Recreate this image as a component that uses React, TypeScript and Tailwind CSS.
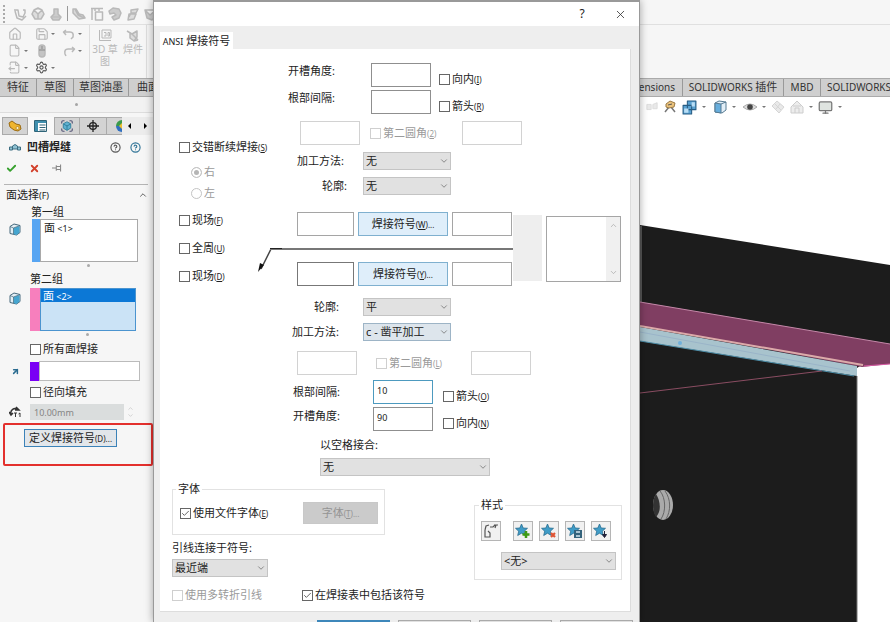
import React from "react";
import {
  Home, Save, File, Settings, FileOutput, Box, Check, X,
  ChevronUp, ChevronDown, Monitor, CircleHelp, ArrowUpRight, Scan,
} from "lucide-react";

function Tick({ children, k, checked, disabled, className = "" }: {
  children: React.ReactNode; k?: string; checked?: boolean; disabled?: boolean; className?: string;
}) {
  return (
    <label className={`flex h-4 shrink-0 items-center gap-[2px] whitespace-nowrap ${disabled ? "text-[#9a9a9a]" : ""} ${className}`}>
      <span className="grid size-[11px] shrink-0">
        <input
          type="checkbox"
          defaultChecked={checked}
          disabled={disabled}
          className={`col-start-1 row-start-1 size-[11px] appearance-none border bg-white ${disabled ? "border-[#cfcfcf]" : "border-[#666]"}`}
        />
        {checked && <Check className="pointer-events-none col-start-1 row-start-1 size-[11px] p-px text-[#333]" />}
      </span>
      <span>{children}{k && <span className="text-[8px]">(<u>{k}</u>)</span>}</span>
    </label>
  );
}

function Drop({ value, label, className = "", tone = "bg-[#e1e1e1] border-[#c4c4c4]" }: {
  value: string; label: string; className?: string; tone?: string;
}) {
  return (
    <span className={`grid h-[18px] shrink-0 ${className}`}>
      <select aria-label={label} className={`col-start-1 row-start-1 h-[18px] w-full appearance-none border pr-4 pl-[2px] text-[11px] leading-4 ${tone}`}>
        <option>{value}</option>
      </select>
      <ChevronDown className="pointer-events-none col-start-1 row-start-1 mr-[2px] size-[10px] self-center justify-self-end text-[#777]" />
    </span>
  );
}

function Field({ label, value, className = "w-[60px]", tone = "border-[#8f8f8f]" }: {
  label: string; value?: string; className?: string; tone?: string;
}) {
  return (
    <input
      aria-label={label}
      defaultValue={value}
      className={`h-6 shrink-0 border bg-white px-[3px] pb-1 text-[9px] ${className} ${tone}`}
    />
  );
}

function Caret() {
  return <span className="size-0 border-x-2 border-t-2 border-x-transparent border-t-[#777]" />;
}

function Glyph({ children, className = "size-[14px]" }: { children: React.ReactNode; className?: string }) {
  return <svg viewBox="0 0 14 14" className={`shrink-0 ${className}`} fill="none" stroke="currentColor" strokeLinejoin="round">{children}</svg>;
}

function RibbonButton({ label, caret, children }: { label: string; caret?: boolean; children: React.ReactNode }) {
  return (
    <button aria-label={label} className="flex h-[17px] w-[27px] items-center justify-between pr-[7px]">
      {children}
      {caret && <Caret />}
    </button>
  );
}

function Ribbon() {
  return (
    <header className="shrink-0 bg-[#f6f6f6]">
      <div className="flex h-[25px] items-center gap-1 overflow-hidden border-b border-[#e0e0e0] pt-[3px] pl-[3px] text-[#b9b9b9]">
        <span className="mr-1 h-[18px] border-l-2 border-dotted border-[#aaa]" />
        <Glyph><path d="M1 3h4l1 6 4 1 2-4V3h-2M2 4l2 7 5 2 4-4" strokeWidth="1.500" /></Glyph>
        <Glyph><path d="M3 3 7 1l4 2 2 4-3 5H4L1 7zM3 3l4 4 4-4M7 7v5" strokeWidth="1.500" fill="#ddd" /></Glyph>
        <Glyph><path d="M5 2h4v5l3 3-2 3H4l-2-3 3-3z" fill="#ccc" strokeWidth="1.500" /><path d="M3 10h8" /></Glyph>
        <span className="h-[15px] border-l border-[#999]" />
        <Glyph><path d="M1 2v4l6 6 6-1-2-3-4-1-3-5zM3 2l3 6 6 3" fill="#d8d8d8" strokeWidth="1.500" /></Glyph>
        <Glyph><path d="M1 1.500h12M2 1v12M5.500 5h7v8h-7zM5 1v3M9 1v3" strokeWidth="1.500" /></Glyph>
        <Glyph><path d="M1 4 5 1l6 1 2 4-2 5-5 2-2-3 4-2-2-2-4 1z" fill="#ccc" strokeWidth="1.500" /></Glyph>
        <Glyph><path d="m5 3 7-1-2 4H5zM3 7h7l-2 5-6 1zM5 6l-2 4" fill="#ddd" strokeWidth="1.500" /></Glyph>
        <Glyph><path d="M1 3h11v6l-4 4-5-2zM1 3l5 5 6-5" fill="#ccc" strokeWidth="1.500" /></Glyph>
      </div>
      <div className="flex h-[53px] text-[#b9b9b9]">
        <div className="grid grid-cols-[27px_27px_27px] content-start border-r border-[#dedede] pl-2">
          <RibbonButton label="主页"><Home className="size-[14px]" /></RibbonButton>
          <RibbonButton label="保存" caret><Save className="size-[14px]" /></RibbonButton>
          <RibbonButton label="撤销" caret><Glyph><path d="M4 3 1.500 5 4 8M2 5h6q4 0 3 5l-2 2" strokeWidth="1.500" /></Glyph></RibbonButton>
          <RibbonButton label="新建" caret><File className="size-[13px]" /></RibbonButton>
          <RibbonButton label="选择"><Glyph><rect x="4" y="1" width="6" height="12" rx="3" fill="#c4c4c4" strokeWidth="1.5" /><path d="M4 6h6M7 2v3" stroke="#888" /></Glyph></RibbonButton>
          <RibbonButton label="重做" caret><Glyph><path d="m10 3 2.500 2L10 8M12 5H6Q2 5 3 10l1 2" strokeWidth="1.500" /></Glyph></RibbonButton>
          <RibbonButton label="打开" caret><FileOutput className="size-[13px]" /></RibbonButton>
          <RibbonButton label="选项" caret><Settings className="size-[13px] text-[#555]" /></RibbonButton>
        </div>
        <button className="flex w-[30px] flex-col items-center pt-1 text-[10px] leading-[12px]">
          <Glyph><path d="M1.500 1v10.500H13M4 1h9v8H4zM6 3.500h2v3.500H6M10 3.500v3.500h1.500v-3.500z" /></Glyph>
          <span>3D 草图</span>
        </button>
        <button className="flex w-[27px] flex-col items-center border-r border-[#dedede] pt-1 text-[10px] leading-[12px]">
          <Glyph><path d="M1 2 6 5l5-3v6l-3 4-4-3V4M6 5l6 6M8 12l4-1" strokeWidth="1.500" fill="#ddd" /></Glyph>
          <span>焊件</span>
        </button>
      </div>
      <nav className="flex h-[19px] border-y border-[#aaa] bg-[#cfcfcf] text-[11px] text-[#333]">
        <button className="w-[37px] border-r border-[#999]">特征</button>
        <button className="w-[37px] border-r border-[#999]">草图</button>
        <button className="w-[55px] border-r border-[#999]">草图油墨</button>
        <button className="w-[431px] border-r border-[#999] pl-2 text-left">曲面</button>
        <button className="w-[123px] border-r border-[#999] pr-[7px] text-right text-[10px]">Dimensions</button>
        <button className="w-[101px] border-r border-[#999] text-[10px] whitespace-nowrap">SOLIDWORKS <span className="text-[11px]">插件</span></button>
        <button className="w-[37px] border-r border-[#999] text-[10px]">MBD</button>
        <button className="min-w-0 flex-1 pl-[6px] text-left text-[10px] whitespace-nowrap">SOLIDWORKS</button>
      </nav>
    </header>
  );
}

function FaceCube() {
  return (
    <svg viewBox="0 0 12 13" className="h-[13px] w-3 shrink-0">
      <path d="M1 3.500 5 1l6 1.500v7L7.500 12 1 10.500z" fill="#e3eef4" stroke="#46697c" strokeLinejoin="round" />
      <path d="M4.500 5 10.500 3v6.500L7.500 12l-3-1z" fill="#45a5cf" />
      <path d="M1 3.500 4.500 5 11 2.500M4.500 5v6" fill="none" stroke="#46697c" strokeWidth=".7" />
    </svg>
  );
}

function PropertyPanel() {
  return (
    <aside className="flex w-[153px] shrink-0 flex-col bg-[#f6f6f6]">
      <div className="grid h-4 place-items-center border-b border-[#ddd] bg-[#f2f2f2]">
        <span className="size-[3px] rounded-full bg-[#a5a5a5]" />
      </div>
      <div className="mt-1 flex h-[18px] pl-[2px]">
        <button aria-label="特征树" className="grid w-[26px] place-items-center border border-[#aaa] bg-[#d3d3d3]">
          <svg viewBox="0 0 14 12" className="h-3 w-[14px]">
            <path d="M1 3 4 1l4 3 4 1 1 4-3 2-4-1-4-3z" fill="#efb52e" stroke="#9a6a12" />
            <circle cx="9.500" cy="8" r="1.500" fill="#fff3c8" stroke="#9a6a12" strokeWidth=".6" />
          </svg>
        </button>
        <button aria-label="属性" className="grid w-[26px] place-items-center bg-[#f8f8f8]">
          <svg viewBox="0 0 13 12" className="h-3 w-[13px]">
            <path d="M.500.500h12v11H.500z" fill="#fff" stroke="#2f6478" />
            <path d="M1 1h3v10H1zM1 1h11v2H1z" fill="#3f8fae" />
            <path d="M5.500 5h6M5.500 7.500h6M5.500 10h6" stroke="#2f6478" />
          </svg>
        </button>
        <button aria-label="配置" className="grid w-[26px] place-items-center border border-[#aaa] bg-[#d3d3d3]">
          <span className="grid">
            <Scan className="col-start-1 row-start-1 size-[14px] text-[#557]" />
            <Box className="col-start-1 row-start-1 size-[10px] place-self-center fill-[#5fb0d0] text-[#2a7896]" />
          </span>
        </button>
        <button aria-label="尺寸" className="grid w-[27px] place-items-center border-y border-[#aaa] bg-[#d3d3d3]">
          <Glyph className="size-3 text-[#222]"><circle cx="7" cy="7" r="4" strokeWidth="1.5" /><path d="M7 0v14M0 7h14" strokeWidth="1.5" /></Glyph>
        </button>
        <button aria-label="外观" className="flex w-[16px] items-center justify-end border border-r-0 border-[#aaa] bg-[#d3d3d3]">
          <svg viewBox="0 0 7 12" className="h-3 w-[7px]">
            <path d="M7 0A6 6 0 0 0 1 6h6z" fill="#3a9a4a" /><path d="M1 6a6 6 0 0 0 6 6V6z" fill="#2f6fc0" /><path d="M7 3v6L4 6z" fill="#f0c030" />
          </svg>
        </button>
        <button aria-label="向左" className="grid w-[15px] place-items-center bg-[#ececec]"><span className="size-0 border-y-[3px] border-r-[3px] border-y-transparent border-r-black" /></button>
        <button aria-label="向右" className="grid w-4 place-items-center bg-[#ececec]"><span className="size-0 border-y-[3px] border-l-[3px] border-y-transparent border-l-black" /></button>
      </div>
      <div className="mt-[3px] flex h-[18px] items-center pr-3 pl-[9px]">
        <svg viewBox="0 0 12 7" className="h-[7px] w-3">
          <path d="M.5 3h3v3h-3zM8.500 3h3v3h-3zM3.500 2 6 .5 8.500 2v3H3.500z" fill="#8fc1d2" stroke="#3d6e82" />
        </svg>
        <h2 className="ml-[6px] flex-1 text-[11px] font-bold">凹槽焊缝</h2>
        <button aria-label="提示" className="mr-[9px]"><CircleHelp className="size-[11px] text-[#555]" strokeWidth={2.5} /></button>
        <button aria-label="帮助"><CircleHelp className="size-[11px] text-[#2f7396]" strokeWidth={2.5} /></button>
      </div>
      <div className="mt-[3px] flex h-[18px] items-center gap-3 pl-[6px]">
        <button aria-label="确定"><Check className="size-[11px] text-[#35a02c]" strokeWidth={4} /></button>
        <button aria-label="取消"><X className="size-[11px] text-[#d2412c]" strokeWidth={4} /></button>
        <button aria-label="固定"><Glyph className="size-[10px] text-[#888]"><path d="M0 7h6M6 3v8M6 5h6v4H6M12 2v10" strokeWidth="1.500" /></Glyph></button>
      </div>
      <section className="mt-[7px] mr-[5px] ml-1 border-t border-[#b5b5b5]">
        <div className="flex h-[20px] items-center justify-between pl-[2px]">
          <h3>面选择<span className="text-[9px]">(F)</span></h3>
          <ChevronUp className="size-[10px] text-[#444]" />
        </div>
        <div className="pl-[27px] leading-[14px]">第一组</div>
        <div className="flex h-[43px] pl-[5px]">
          <div className="w-[23px] pt-1"><FaceCube /></div>
          <div className="w-2 bg-[#57a5f2]" />
          <div className="w-[98px] border border-[#a9a9a9] bg-white pl-[3px] leading-[15px]">面<span className="text-[9px]"> &lt;1&gt;</span></div>
        </div>
        <div className="mt-[2px] ml-[83px] size-[3px] rounded-full bg-[#aaa]" />
        <div className="mt-[5px] pl-[26px] leading-[14px]">第二组</div>
        <div className="mt-[2px] flex h-[43px] pl-[5px]">
          <div className="w-[21px] pt-1"><FaceCube /></div>
          <div className="w-[10px] bg-[#f77fbd]" />
          <div className="w-[96px] border border-[#4b94cf] bg-[#cbe3f6]">
            <div className="h-[13px] bg-[#0c78d6] pl-[2px] leading-[13px] text-white">面<span className="text-[9px]"> &lt;2&gt;</span></div>
          </div>
        </div>
        <div className="mt-[2px] ml-[82px] size-[3px] rounded-full bg-[#aaa]" />
        <Tick className="mt-[5px] ml-[26px]">所有面焊接</Tick>
        <div className="mt-1 flex h-5 items-center pl-[7px]">
          <ArrowUpRight className="mr-[10px] size-[9px] text-[#2a6c90]" strokeWidth={4} />
          <span className="h-[19px] w-[9px] bg-[#7a00f5]" />
          <input aria-label="焊接方向" className="h-5 w-[101px] border border-[#bbb] bg-white" />
        </div>
        <Tick className="mt-[3px] ml-[26px]">径向填充</Tick>
        <div className="mt-1 flex h-4 items-center pl-[5px]">
          <svg viewBox="0 0 13 12" className="mr-2 h-3 w-[13px]" fill="none" stroke="#333">
            <path d="M2 8C1 4 5 1 9 3.500M0 6l2 3 2-2M7 1l3 3H6" strokeWidth="1.5" />
            <path d="M5 7h3M6.500 7v4M9.500 8l1.500-1v4" />
          </svg>
          <input aria-label="半径" disabled defaultValue="10.00mm" className="h-4 w-[94px] bg-[#dadddd] px-1 text-[9px] text-[#858585]" />
          <span className="ml-[3px] flex flex-col justify-between text-[#bbb]">
            <ChevronUp className="size-[7px]" /><ChevronDown className="size-[7px]" />
          </span>
        </div>
      </section>
      <div className="mt-[3px] ml-[3px] h-[43px] rounded-[2px] border-2 border-[#e3302d] pt-1 pl-[19px]">
        <button className="h-[18px] w-[93px] border border-[#3b82b8] bg-[#e2e6ea] leading-4 whitespace-nowrap">
          定义焊接符号<span className="text-[8px]">(D)...</span>
        </button>
      </div>
    </aside>
  );
}

function Viewport() {
  return (
    <main className="flex min-w-0 flex-1 flex-col bg-white pl-[487px]">
      <div className="flex h-5 shrink-0 items-center gap-[5px] pl-[6px] text-[#777]">
        <Glyph className="size-3 text-[#d9d9d9]"><path d="M1 4h5v6H1zM8 4l5-2v7H8z" fill="#e9e9e9" /></Glyph>
        <Glyph><path d="m2 12 4-5M8 7l4 5" stroke="#777" strokeWidth="1.500" /><path d="m3 4 4-3 5 2-1 4-5 1-3-1z" fill="#eac27c" stroke="#9a7a45" /><path d="m5 5 4-1" stroke="#555" /></Glyph>
        <Glyph className="size-[15px]"><path d="M1 5h8v8H1zM5 1h8v8H5z" fill="#5aa2d2" stroke="#275d84" /><path d="M9 2h3v4H9zM2 8h4v4H2z" fill="#b9def5" stroke="none" /></Glyph>
        <Caret />
        <Glyph className="ml-[2px] size-[14px]"><path d="M2 3 6 1l7 1v8l-4 3-7-1z" fill="#e2eff8" stroke="#567a92" /><path d="M2 3 8 4v9l-6-1z" fill="#67aedd" stroke="#567a92" /><path d="m8 4 5-2" stroke="#567a92" /></Glyph>
        <Caret />
        <Glyph className="ml-[2px] size-[14px] text-[#777]"><path d="M0 7Q7 1 14 7 7 13 0 7z" fill="#ddd" stroke="#aaa" /><circle cx="7" cy="7" r="2.8" fill="#444" stroke="none" /></Glyph>
        <Caret />
        <Glyph className="size-[14px] text-[#d5d5d5]"><path d="m1 6 5-5 7 6-5 6zM4 4l6 6M9 4 5 9" fill="#e9e9e9" /></Glyph>
        <Glyph className="size-[14px] text-[#cdcdcd]"><path d="m1 7 6-6 6 6v6H1zM5 13V8h4v5M3 6h8" fill="#ededed" /></Glyph>
        <Caret />
        <Monitor className="size-[15px] fill-[#dfe4e0] text-[#777]" />
        <Caret />
      </div>
      <svg viewBox="640 117 250 505" preserveAspectRatio="xMinYMin slice" className="min-h-0 w-full flex-1">
        <path d="M640 225 890 265V346L857 368V622H640z" fill="#1c1c1c" />
        <path d="M641 226V302" stroke="#555" strokeWidth="2" />
        <path d="M640 302 890 344V364L862 367 640 326z" fill="#803e62" />
        <path d="M640 302 890 344" stroke="#c588a9" />
        <path d="M864 366 890 364" stroke="#d85aa5" />
        <path d="M640 327 857 366V376L640 341z" fill="#a8c3cd" />
        <path d="M640 332 850 371" stroke="#9ab4c8" />
        <path d="M640 326 863 365" stroke="#dcabaa" strokeWidth="2" />
        <path d="M640 341 854 376" stroke="#4e8ea8" />
        <circle cx="680" cy="343" r="2" fill="#6fb0dc" />
        <path d="M640 393 822 371" stroke="#8a4d62" />
        <path d="M857 376V622" stroke="#777" />
        <ellipse cx="663" cy="505" rx="10" ry="15" fill="#aaa" />
        <path d="M656 494c4 6 6 17 0 23-4-5-4-18 0-23z" fill="#333" />
        <path d="M660 491c6 7 6 21 1 28M665 491c6 8 6 20 1 28" fill="none" stroke="#666" />
      </svg>
    </main>
  );
}

function StyleButton({ label, className = "", children }: { label: string; className?: string; children: React.ReactNode }) {
  return (
    <button aria-label={label} className={`grid size-5 place-items-center border border-[#b5b5b5] bg-[#f1f1f1] ${className}`}>
      <svg viewBox="0 0 16 16" className="size-4">{children}</svg>
    </button>
  );
}

function StarShape() {
  return <path d="M6.500 1 8.200 5l4.300.3L9.300 8.200l1 4.300L6.500 10.200 2.700 12.500l1-4.300L.5 5.300 4.800 5z" fill="#3f9cc7" stroke="#2a6d90" strokeWidth=".8" />;
}

function WeldDialog() {
  const name = "shrink-0 h-4 leading-4 whitespace-nowrap";
  const faint = "border-[#d2d2d2]";
  return (
    <div role="dialog" aria-label="ANSI 焊接符号" className="absolute inset-y-0 left-[153px] w-[487px] overflow-hidden border-x border-t-2 border-[#999] bg-[#eee] shadow-[0_0_8px_rgba(0,0,0,0.35)]">
      <div className="flex h-6 items-center justify-end bg-white">
        <button aria-label="帮助" className="w-[38px] text-xs">?</button>
        <button aria-label="关闭" className="grid w-[38px] place-items-center"><X className="size-[13px] text-[#333]" strokeWidth={1.5} /></button>
      </div>
      <div className="pt-[6px] pr-2 pl-[6px]">
        <div role="tablist" className="flex">
          <button role="tab" aria-selected="true" className="h-[17px] w-[73px] bg-white leading-[17px] whitespace-nowrap"><span className="text-[9px]">ANSI</span> 焊接符号</button>
        </div>
        <div className="border-r border-b border-[#ddd] bg-white pb-2">
          <div className="flex">
            <div className="flex w-24 shrink-0 flex-col pt-[90px] pl-[19px]">
              <Tick k="S">交错断续焊接</Tick>
              {["右", "左"].map((side, i) => (
                <label key={side} className={`ml-3 flex h-4 items-center gap-[2px] text-[#9a9a9a] ${i ? "mt-[5px]" : "mt-[9px]"}`}>
                  <input type="radio" name="stagger" disabled defaultChecked={i === 0} className="size-[11px] appearance-none rounded-full border border-[#c4c4c4] bg-white checked:bg-[#b5b5b5] checked:shadow-[inset_0_0_0_2px_white]" />
                  {side}
                </label>
              ))}
              <Tick k="F" className="mt-[11px]">现场</Tick>
              <Tick k="U" className="mt-3">全周</Tick>
              <Tick k="D" className="mt-3">现场</Tick>
            </div>
            <div className="min-w-0 flex-1 pt-[14px]">
              <div className="flex h-6 pl-8">
                <span className={`${name} w-[83px]`}>开槽角度:</span>
                <Field label="开槽角度" />
                <Tick k="I" className="ml-2 self-end">向内</Tick>
              </div>
              <div className="mt-[3px] flex h-6 pl-8">
                <span className={`${name} w-[83px]`}>根部间隔:</span>
                <Field label="根部间隔" />
                <Tick k="R" className="ml-2 self-end">箭头</Tick>
              </div>
              <div className="mt-[7px] flex items-center pl-11">
                <Field label="第一圆角" tone={faint} />
                <Tick k="2" disabled className="ml-[10px] w-[92px]">第二圆角</Tick>
                <Field label="第二圆角" tone={faint} />
              </div>
              <div className="mt-[7px] flex items-center">
                <span className={`${name} w-[107px] pr-[19px] text-right`}>加工方法:</span>
                <Drop label="加工方法" value="无" className="w-[88px]" />
              </div>
              <div className="mt-[7px] flex items-center">
                <span className={`${name} w-[107px] pr-4 text-right`}>轮廓:</span>
                <Drop label="轮廓" value="无" className="w-[88px]" />
              </div>
              <div className="mt-[17px] flex">
                <div className="w-[257px] shrink-0">
                  <div className="flex gap-1 pl-[41px]">
                    <Field label="上方前缀" className="w-[57px]" tone="border-[#a5a5a5]" />
                    <button className="h-6 w-[90px] border border-[#7fb0cf] bg-[#dfeefa]">焊接符号<span className="text-[8px]">(<u>W</u>)...</span></button>
                    <Field label="上方后缀" tone="border-[#a5a5a5]" />
                  </div>
                  <svg viewBox="0 0 257 26" className="h-[26px] w-[257px] overflow-visible" fill="none" stroke="#777">
                    <path d="M5 33 15 13" stroke="#444" strokeWidth="1.5" />
                    <path d="M14 13H257" strokeWidth="2" />
                    <path d="M14 12.500H26" stroke="#222" />
                    <path d="M2 36 4 27 8 29z" fill="#111" stroke="none" />
                  </svg>
                  <div className="flex gap-1 pl-[41px]">
                    <Field label="下方前缀" className="w-[57px]" tone="border-[#777]" />
                    <button className="h-6 w-[90px] border border-[#7fb0cf] bg-[#dfeefa]">焊接符号<span className="text-[8px]">(<u>Y</u>)...</span></button>
                    <Field label="下方后缀" tone="border-[#a5a5a5]" />
                  </div>
                </div>
                <div className="mt-[3px] h-[66px] w-[29px] shrink-0 bg-[#eee]" />
                <div className="mt-1 ml-1 flex h-[66px] w-[75px] shrink-0 border border-[#a5a5a5]">
                  <textarea aria-label="说明" className="min-w-0 flex-1 resize-none bg-white" />
                  <span className="flex w-[14px] flex-col items-center justify-between bg-[#f0f0f0] py-1 text-[#aaa]">
                    <ChevronUp className="size-[9px]" /><ChevronDown className="size-[9px]" />
                  </span>
                </div>
              </div>
              <div className="mt-3 flex items-center">
                <span className={`${name} w-[107px] pr-6 text-right`}>轮廓:</span>
                <Drop label="轮廓" value="平" className="w-[88px]" />
              </div>
              <div className="mt-[7px] flex items-center">
                <span className={`${name} w-[107px] pr-6 text-right`}>加工方法:</span>
                <Drop label="加工方法" value="c - 凿平加工" className="w-[88px]" tone="bg-[#dde5ec] border-[#9db4c6]" />
              </div>
              <div className="mt-[10px] flex items-center pl-[41px]">
                <Field label="第一圆角" tone={faint} />
                <Tick k="L" disabled className="ml-[19px] w-[95px]">第二圆角</Tick>
                <Field label="第二圆角" tone={faint} />
              </div>
              <div className="mt-[5px] flex h-6 pl-[37px]">
                <span className={`${name} mt-1 w-[80px]`}>根部间隔:</span>
                <Field label="根部间隔" value="10" tone="border-[#4d9abf]" />
                <Tick k="O" className="ml-[10px] self-end">箭头</Tick>
              </div>
              <div className="mt-[3px] flex h-6 pl-[37px]">
                <span className={`${name} mt-px w-[80px]`}>开槽角度:</span>
                <Field label="开槽角度" value="90" />
                <Tick k="N" className="ml-[10px] self-end">向内</Tick>
              </div>
              <div className="mt-[7px] pl-16 leading-[14px]">以空格接合:</div>
              <div className="mt-[6px] pl-16"><Drop label="以空格接合" value="无" className="w-[170px]" /></div>
            </div>
          </div>
          <div className="flex justify-between pr-2 pl-3">
            <div className="pt-[6px]">
              <fieldset className="h-[53px] w-[213px] border border-[#e2e2e2] pl-[7px]">
                <legend className="-ml-1 h-[14px] px-[2px] leading-[14px]">字体</legend>
                <div className="mt-[6px] flex items-center justify-between pr-[6px]">
                  <Tick k="E" checked>使用文件字体</Tick>
                  <button disabled className="h-[22px] w-[75px] border border-[#c8c8c8] bg-[#cbcbcb] text-[#949494]">字体<span className="text-[8px]">(<u>T</u>)...</span></button>
                </div>
              </fieldset>
              <div className="mt-[5px] h-4 leading-4">引线连接于符号:</div>
              <Drop label="引线连接于符号" value="最近端" className="mt-[3px] w-[96px]" />
              <div className="mt-[10px] flex">
                <Tick disabled className="w-[130px]">使用多转折引线</Tick>
                <Tick checked>在焊接表中包括该符号</Tick>
              </div>
            </div>
            <fieldset className="mt-[22px] h-[82px] w-[148px] self-start border border-[#e2e2e2] pl-[6px]">
              <legend className="-ml-[2px] h-[14px] px-[2px] leading-[14px]">样式</legend>
              <div className="mt-[9px] flex gap-[6px]">
                <StyleButton label="默认" className="mr-[6px]">
                  <path d="M2 7v7h5v-4l-2-2M2 7l1-4 3-1M7 4h3l2-2M11 2h4M13 2l-1 3" fill="none" stroke="#555" strokeWidth="1.200" />
                </StyleButton>
                <StyleButton label="添加样式"><StarShape /><path d="M11 8v7M7.500 11.500h7" stroke="#3e9a14" strokeWidth="2.5" /></StyleButton>
                <StyleButton label="删除样式"><StarShape /><path d="m10 10 4 4m0-4-4 4" stroke="#e05433" strokeWidth="2.2" /></StyleButton>
                <StyleButton label="保存样式"><StarShape /><path d="M7 7h8v8H7z" fill="#34637c" /><path d="M9 8h4v2H9zM9 12h4v2H9z" fill="#a9c4d2" /></StyleButton>
                <StyleButton label="装入样式"><StarShape /><path d="M11.500 8v4M9.500 11.500h4l-2 3z" fill="#202038" stroke="#202038" /></StyleButton>
              </div>
              <Drop label="样式" value="<无>" className="mt-[11px] ml-5 w-[115px]" />
            </fieldset>
          </div>
        </div>
      </div>
      <div className="mt-2 flex justify-end gap-2 pr-[6px]">
        <button aria-label="确定" className="h-5 w-[73px] border-2 border-[#3d87ba] bg-[#e1e1e1]" />
        <button aria-label="取消" className="h-5 w-[73px] border border-[#aaa] bg-[#e1e1e1]" />
        <button aria-label="应用" className="h-5 w-[73px] border border-[#aaa] bg-[#e1e1e1]" />
        <button aria-label="帮助" className="h-5 w-[73px] border border-[#aaa] bg-[#e1e1e1]" />
      </div>
    </div>
  );
}

export default function App() {
  return (
    <div className="relative flex h-screen flex-col overflow-hidden font-['Noto_Sans','Noto_Sans_CJK_SC',sans-serif] text-[11px] text-[#222]">
      <Ribbon />
      <div className="flex min-h-0 flex-1">
        <PropertyPanel />
        <Viewport />
      </div>
      <WeldDialog />
    </div>
  );
}
